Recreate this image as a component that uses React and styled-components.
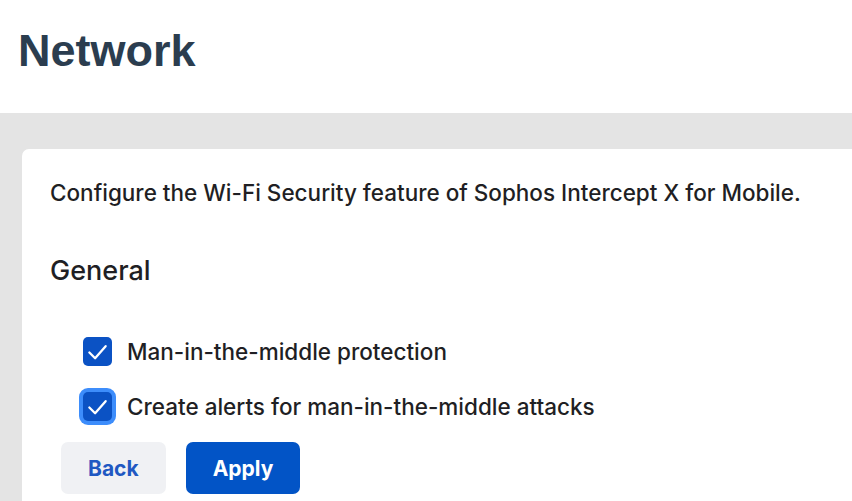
import React from 'react'
import styled, { createGlobalStyle } from 'styled-components'

const GlobalStyle = createGlobalStyle`
  html, body {
    margin: 0;
    padding: 0;
    background: #e4e4e4;
    font-family: Inter, "Noto Sans", sans-serif;
    overflow: hidden;
  }
`;

const Header = styled.header`
  background: #ffffff;
  height: 113px;
  padding: 0 0 0 18px;
  box-sizing: border-box;
`;

const Title = styled.h1`
  margin: 0;
  padding-top: 27px;
  font-family: "Liberation Sans", Arial, sans-serif;
  font-weight: 700;
  font-size: 45px;
  line-height: 48px;
  color: #2b3d4f;
`;

const Page = styled.main`
  padding: 36px 0 0 22px;
`;

const Card = styled.section`
  background: #ffffff;
  border-radius: 7px 0 0 0;
  padding: 30px 0 0 28px;
  height: 352px;
  box-sizing: border-box;
  color: #1f1f24;
`;

const Intro = styled.p`
  margin: 0;
  font-size: 22.5px;
  font-weight: 500;
  line-height: 28px;
`;

const Section = styled.h2`
  margin: 48px 0 0;
  font-size: 27px;
  font-weight: 500;
  line-height: 32px;
`;

const Options = styled.div`
  display: flex;
  flex-direction: column;
  gap: 26px;
  margin: 50px 0 0 33px;
`;

const Option = styled.label`
  display: flex;
  align-items: center;
  gap: 15px;
  font-size: 22.5px;
  font-weight: 500;
  line-height: 29px;
`;

const Box = styled.span`
  width: 29px;
  height: 29px;
  border-radius: 5px;
  background: #0b52c4;
  display: flex;
  align-items: center;
  justify-content: center;
  flex-shrink: 0;
  box-shadow: ${p => (p.$focused ? '0 0 0 4px #3d8dfb' : 'none')};
`;

const Actions = styled.div`
  display: flex;
  gap: 20px;
  margin: 21px 0 0 11px;
`;

const Button = styled.button`
  height: 52px;
  padding: 0 27px;
  border: none;
  border-radius: 7px;
  font-family: Inter, sans-serif;
  font-size: 21px;
  font-weight: 700;
  background: ${p => (p.$primary ? '#0254c6' : '#f0f1f4')};
  color: ${p => (p.$primary ? '#ffffff' : '#1f58c2')};
  cursor: pointer;
`;

function Check({ focused }) {
  return (
    <Box $focused={focused}>
      <svg width="23" height="23" viewBox="0 0 24 24" fill="none">
        <path d="M3.5 13 L9.5 19 L20.5 6.5" stroke="#ffffff" strokeWidth="2.4" strokeLinecap="round" strokeLinejoin="round" />
      </svg>
    </Box>
  );
}

export default function App() {
  return (
    <>
      <GlobalStyle />
      <Header>
        <Title>Network</Title>
      </Header>
      <Page>
        <Card>
          <Intro>Configure the Wi-Fi Security feature of Sophos Intercept X for Mobile.</Intro>
          <Section>General</Section>
          <Options>
            <Option><Check />Man-in-the-middle protection</Option>
            <Option><Check focused />Create alerts for man-in-the-middle attacks</Option>
          </Options>
          <Actions>
            <Button>Back</Button>
            <Button $primary>Apply</Button>
          </Actions>
        </Card>
      </Page>
    </>
  );
}
